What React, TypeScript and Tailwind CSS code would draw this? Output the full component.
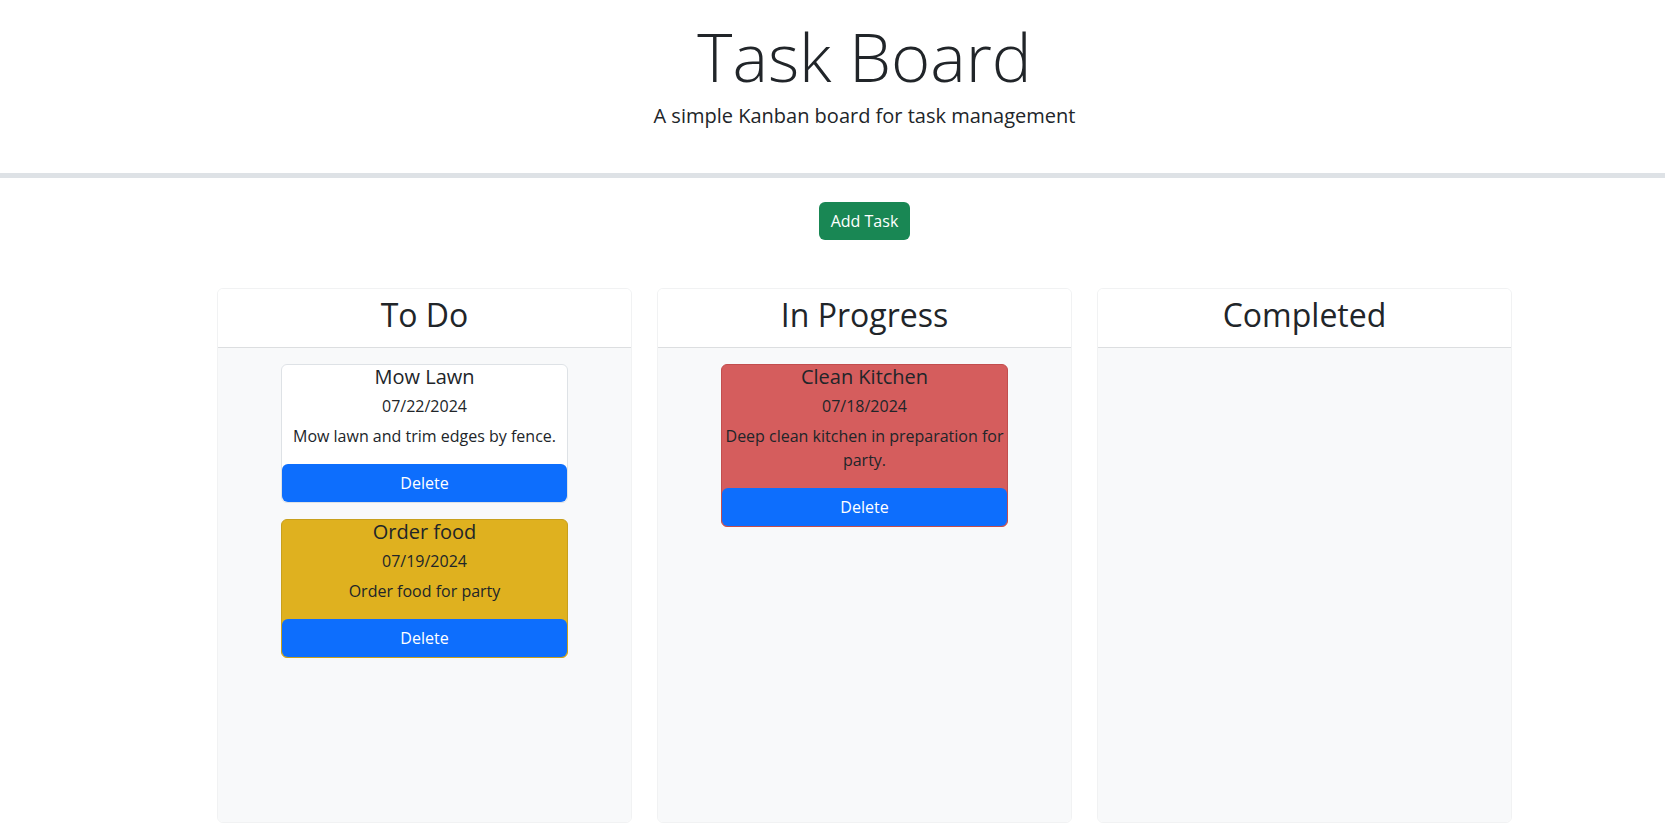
import React from "react";

type Task = {
  title: string;
  date: string;
  desc: string;
  tone: "white" | "warn" | "late";
};

const columns: { name: string; tasks: Task[] }[] = [
  {
    name: "To Do",
    tasks: [
      { title: "Mow Lawn", date: "07/22/2024", desc: "Mow lawn and trim edges by fence.", tone: "white" },
      { title: "Order food", date: "07/19/2024", desc: "Order food for party", tone: "warn" },
    ],
  },
  {
    name: "In Progress",
    tasks: [
      {
        title: "Clean Kitchen",
        date: "07/18/2024",
        desc: "Deep clean kitchen in preparation for party.",
        tone: "late",
      },
    ],
  },
  { name: "Completed", tasks: [] },
];

function TaskCard({ task }: { task: Task }) {
  const tone =
    task.tone === "warn"
      ? "bg-[#dfb11f] border-[#c8a01c]"
      : task.tone === "late"
        ? "bg-[#d55d5d] border-[#c24e4e]"
        : "bg-white border-[#dee2e6]";

  return (
    <div className={`w-[287px] mx-auto mb-4 border rounded-md text-center text-[#212529] ${tone}`}>
      <h5 className="text-[20px] leading-[24px]">{task.title}</h5>
      <p className="mt-[5px] text-[16px] leading-[24px]">{task.date}</p>
      <p className="mt-[6px] mb-4 text-[16px] leading-[24px]">{task.desc}</p>
      <button className="w-full h-[38px] bg-[#0d6efd] text-white text-[16px] rounded-md">Delete</button>
    </div>
  );
}

export default function App() {
  return (
    <div className="min-h-screen bg-white text-[#212529] font-['Open_Sans',sans-serif]">
      {/* Header */}
      <header className="pl-16 text-center">
        <h1 className="pt-[16px] text-[67px] leading-[1.2] font-light">Task Board</h1>
        <p className="mt-[5px] text-[20px] leading-[30px]">A simple Kanban board for task management</p>
      </header>
      <div className="mt-[42px] h-[5px] bg-[#dee2e6]" />

      <main className="pl-16">
        <div className="flex justify-center pt-6">
          <button className="h-[38px] px-3 rounded-md bg-[#198754] text-white text-[16px]">Add Task</button>
        </div>

        <div className="mt-12 mx-auto w-[1295px] grid grid-cols-3 gap-[25px]">
          {columns.map((col) => (
            <section
              key={col.name}
              className="h-[535px] flex flex-col border border-[#f1f2f3] rounded-md overflow-hidden"
            >
              <div className="h-[59px] shrink-0 bg-white border-b border-[#dcdee0] pt-[7px] text-center">
                <h2 className="text-[32px] leading-[1.2]">{col.name}</h2>
              </div>
              <div className="flex-1 bg-[#f8f9fa] p-4">
                {col.tasks.map((t) => (
                  <TaskCard key={t.title} task={t} />
                ))}
              </div>
            </section>
          ))}
        </div>
      </main>
    </div>
  );
}
